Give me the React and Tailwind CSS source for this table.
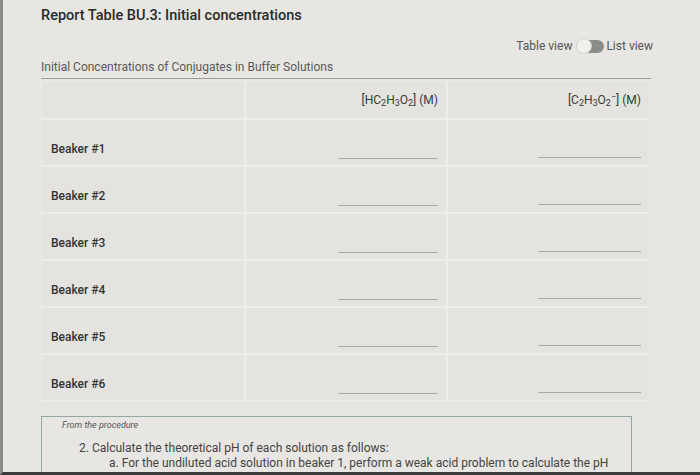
import React from 'react';

const rows = [1, 2, 3, 4, 5, 6];

function Toggle() {
  return (
    <span className="relative inline-flex items-center w-[30px] h-[16px] mx-[2px]">
      <span className="absolute right-0 w-[18px] h-[13px] rounded-r-full bg-[#8c8b88]"></span>
      <span className="absolute left-[2px] w-[16px] h-[16px] rounded-full bg-[#f1f0ed] border border-[#d4d3cf]"></span>
    </span>
  );
}

export default function App() {
  return (
    <div
      className="w-[700px] h-[475px] bg-[#e7e6e2] border-l-[3px] border-[#8d8b87] border-b-[3px] border-b-[#3b3b3b] overflow-hidden text-[#333]"
      style={{ fontFamily: 'Roboto, "Liberation Sans", sans-serif' }}
    >
      <div className="pl-[38px] pt-[7px]">
        <h1 className="text-[14.5px] font-medium text-[#2a2a2a] leading-[18px]">
          Report Table BU.3: Initial concentrations
        </h1>

        <div className="flex justify-end items-center w-[612px] mt-[12px] text-[12px] text-[#555]">
          <span>Table view</span>
          <Toggle />
          <span>List view</span>
        </div>

        <div className="w-[610px] mt-[3px] border-b-[1.5px] border-[#9c9b98] pb-[2px] text-[12px] text-[#5a5a5a]">
          Initial Concentrations of Conjugates in Buffer Solutions
        </div>

        <div className="mt-[2px] w-[607px] grid grid-cols-[202px_200px_201px] gap-[2px] bg-[#eeede9] p-[1px] text-[12px]">
          <div className="h-[36px] bg-[#e4e3df]"></div>
          <div className="h-[36px] bg-[#e4e3df] flex items-center justify-end pr-[8px] text-[#3a3a3a] leading-none">
            <span>[HC<sub className="text-[9px]">2</sub>H<sub className="text-[9px]">3</sub>O<sub className="text-[9px]">2</sub>] (M)</span>
          </div>
          <div className="h-[36px] bg-[#e4e3df] flex items-center justify-end pr-[8px] text-[#3a3a3a] leading-none">
            <span>[C<sub className="text-[9px]">2</sub>H<sub className="text-[9px]">3</sub>O<sub className="text-[9px]">2</sub><sup className="text-[9px]">−</sup>] (M)</span>
          </div>
          {rows.map((n) => (
            <React.Fragment key={n}>
              <div className="h-[45px] bg-[#e4e3df] flex items-end pb-[7px] pl-[9px] font-medium text-[#333]">
                Beaker #{n}
              </div>
              <div className="h-[45px] bg-[#e4e3df] flex items-end justify-end pb-[6px] pr-[8px]">
                <div className="w-[100px] border-b border-[#a9a8a5]"></div>
              </div>
              <div className="h-[45px] bg-[#e4e3df] flex items-end justify-end pb-[7px] pr-[8px]">
                <div className="w-[103px] border-b border-[#a9a8a5]"></div>
              </div>
            </React.Fragment>
          ))}
        </div>

        <div className="mt-[15px] w-[591px] h-[80px] border-[1.5px] border-[#95a7a4] pl-[20px] pt-[2px]">
          <div className="text-[9px] italic text-[#555]">From the procedure</div>
          <div className="mt-[8px] pl-[17px] text-[12px] text-[#444] leading-[15px]">
            2. Calculate the theoretical pH of each solution as follows:
          </div>
          <div className="pl-[47px] text-[12px] text-[#444] leading-[15px]">
            a. For the undiluted acid solution in beaker 1, perform a weak acid problem to calculate the pH
          </div>
        </div>
      </div>
    </div>
  );
}
